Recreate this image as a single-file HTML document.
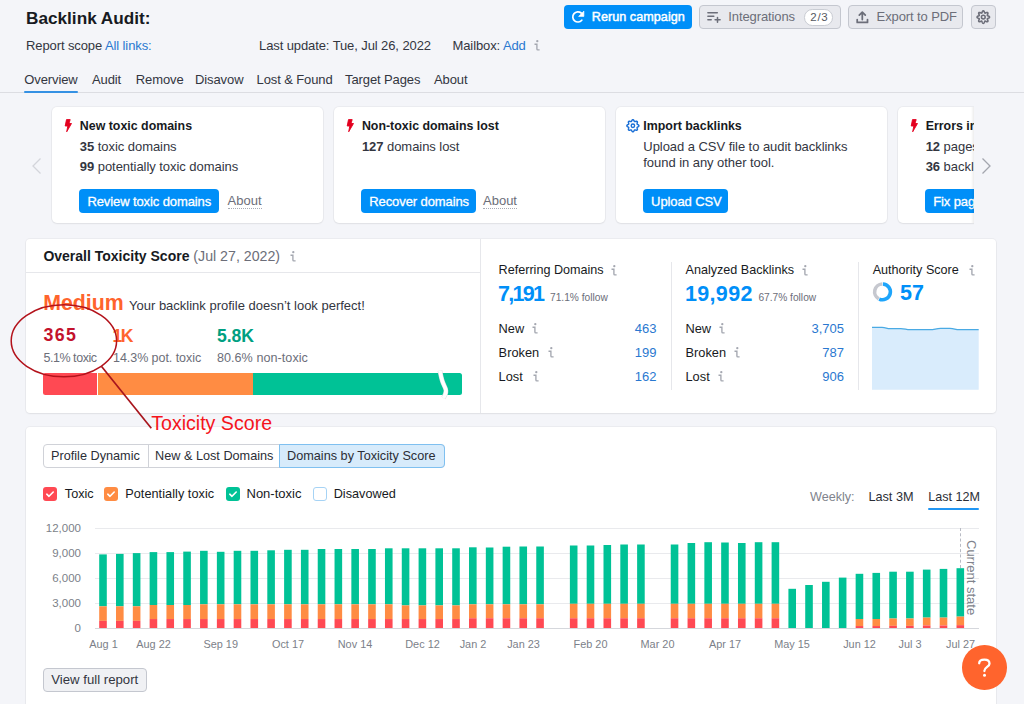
<!DOCTYPE html>
<html><head><meta charset="utf-8"><style>
html,body{margin:0;padding:0;width:1024px;height:704px;overflow:hidden;background:#f4f5f9;}
body{position:relative;font-family:"Liberation Sans",sans-serif;}
.t{position:absolute;white-space:nowrap;line-height:normal;}
.r{position:absolute;}
</style></head><body>
<div class="t" style="left:26.00px;top:7.68px;font-size:17.2px;font-weight:bold;color:#171a22;">Backlink Audit:</div>
<div class="t" style="left:26.00px;top:37.73px;font-size:13px;font-weight:normal;color:#33363f;letter-spacing:-0.1px">Report scope <span style="color:#2a78d0">All links:</span></div>
<div class="t" style="left:259.00px;top:37.73px;font-size:13px;font-weight:normal;color:#33363f;letter-spacing:-0.1px">Last update: Tue, Jul 26, 2022</div>
<div class="t" style="left:452.50px;top:37.73px;font-size:13px;font-weight:normal;color:#33363f;letter-spacing:-0.1px">Mailbox: <span style="color:#2a78d0">Add</span></div>
<svg class="r" style="left:534.00px;top:40.00px" width="7" height="11" viewBox="0 0 7 11"><circle cx="3.3" cy="1.2" r="1.15" fill="#a4a7b0"/><path d="M0.5 4.2H2.9V9Q2.9 9.9 3.8 9.9H5.6" fill="none" stroke="#a4a7b0" stroke-width="1.35"/></svg>
<div class="t" style="left:24.25px;top:71.98px;font-size:13px;font-weight:normal;color:#33363f;letter-spacing:-0.1px">Overview</div>
<div class="t" style="left:92.00px;top:71.98px;font-size:13px;font-weight:normal;color:#33363f;letter-spacing:-0.1px">Audit</div>
<div class="t" style="left:135.75px;top:71.98px;font-size:13px;font-weight:normal;color:#33363f;letter-spacing:-0.1px">Remove</div>
<div class="t" style="left:195.00px;top:71.98px;font-size:13px;font-weight:normal;color:#33363f;letter-spacing:-0.1px">Disavow</div>
<div class="t" style="left:256.50px;top:71.98px;font-size:13px;font-weight:normal;color:#33363f;letter-spacing:-0.1px">Lost &amp; Found</div>
<div class="t" style="left:345.00px;top:71.98px;font-size:13px;font-weight:normal;color:#33363f;letter-spacing:-0.1px">Target Pages</div>
<div class="t" style="left:434.00px;top:71.98px;font-size:13px;font-weight:normal;color:#33363f;letter-spacing:-0.1px">About</div>
<div class="r" style="left:0.00px;top:92.00px;width:1024.00px;height:1.00px;background:#dcdde2"></div>
<div class="r" style="left:24.00px;top:90.60px;width:53.50px;height:2.20px;background:#3591e3;border-radius:1px"></div>
<div class="r" style="left:564.00px;top:5.00px;width:128.00px;height:24.00px;background:#008ff8;border-radius:4px"></div>
<svg class="r" style="left:566px;top:6px" width="30" height="22" viewBox="0 0 30 22"><path d="M15.2 7.0A5.1 5.1 0 1 0 15.8 14.2" fill="none" stroke="#fff" stroke-width="1.7" stroke-linecap="round"/><path d="M17.9 5.1V10.4H12.6Z" fill="#fff" stroke="#fff" stroke-width="0.6" stroke-linejoin="round"/></svg>
<div class="t" style="left:591.75px;top:9.50px;font-size:12.6px;font-weight:normal;color:#fff;-webkit-text-stroke:0.45px #fff;letter-spacing:0.05px">Rerun campaign</div>
<div class="r" style="left:699.00px;top:5.00px;width:141.70px;height:24.00px;background:#e8e9ee;border:1px solid #c4c7cf;border-radius:4px;box-sizing:border-box"></div>
<svg class="r" style="left:700px;top:6px" width="30" height="22" viewBox="0 0 30 22"><path d="M7.9 6.7H17.3M7.9 10.3H13.8M7.9 13.75H11.2M15.1 13.75H20.1M17.5 11.6V16.2" fill="none" stroke="#6c6e79" stroke-width="1.55" stroke-linecap="round"/></svg>
<div class="t" style="left:728.25px;top:9.04px;font-size:13px;font-weight:normal;color:#6c6e79;letter-spacing:-0.1px">Integrations</div>
<div class="r" style="left:804.30px;top:9.00px;width:28.30px;height:16.50px;background:#fff;border:1px solid #c9ccd3;border-radius:8.25px;box-sizing:border-box"></div>
<div class="t" style="left:810.30px;top:11.09px;font-size:11.5px;font-weight:normal;color:#55585f;letter-spacing:0.7px">2/3</div>
<div class="r" style="left:848.00px;top:5.00px;width:115.00px;height:24.00px;background:#e8e9ee;border:1px solid #c4c7cf;border-radius:4px;box-sizing:border-box"></div>
<svg class="r" style="left:850px;top:6px" width="30" height="22" viewBox="0 0 30 22"><path d="M12.3 13.6V6.2M9.3 9.1L12.3 6.1L15.3 9.1M7.2 13.5V16.4H17.5V13.5" fill="none" stroke="#6c6e79" stroke-width="1.75" stroke-linecap="round" stroke-linejoin="round"/></svg>
<div class="t" style="left:876.60px;top:9.04px;font-size:13px;font-weight:normal;color:#6c6e79;letter-spacing:-0.1px">Export to PDF</div>
<div class="r" style="left:971.00px;top:5.00px;width:25.00px;height:24.00px;background:#e8e9ee;border:1px solid #c4c7cf;border-radius:4px;box-sizing:border-box"></div>
<svg class="r" style="left:971px;top:5px" width="25" height="24" viewBox="0 0 25 24"><path d="M12.30 5.85 L12.54 5.90 L12.78 6.05 L12.99 6.28 L13.18 6.58 L13.33 6.90 L13.47 7.23 L13.59 7.54 L13.70 7.79 L13.82 7.98 L13.96 8.08 L14.14 8.11 L14.36 8.06 L14.62 7.96 L14.92 7.83 L15.24 7.69 L15.59 7.57 L15.93 7.50 L16.24 7.49 L16.51 7.54 L16.72 7.68 L16.86 7.89 L16.91 8.16 L16.90 8.47 L16.83 8.81 L16.71 9.16 L16.57 9.48 L16.44 9.78 L16.34 10.04 L16.29 10.26 L16.32 10.44 L16.42 10.58 L16.61 10.70 L16.86 10.81 L17.17 10.93 L17.50 11.07 L17.82 11.22 L18.12 11.41 L18.35 11.62 L18.50 11.86 L18.55 12.10 L18.50 12.34 L18.35 12.58 L18.12 12.79 L17.82 12.98 L17.50 13.13 L17.17 13.27 L16.86 13.39 L16.61 13.50 L16.42 13.62 L16.32 13.76 L16.29 13.94 L16.34 14.16 L16.44 14.42 L16.57 14.72 L16.71 15.04 L16.83 15.39 L16.90 15.73 L16.91 16.04 L16.86 16.31 L16.72 16.52 L16.51 16.66 L16.24 16.71 L15.93 16.70 L15.59 16.63 L15.24 16.51 L14.92 16.37 L14.62 16.24 L14.36 16.14 L14.14 16.09 L13.96 16.12 L13.82 16.22 L13.70 16.41 L13.59 16.66 L13.47 16.97 L13.33 17.30 L13.18 17.62 L12.99 17.92 L12.78 18.15 L12.54 18.30 L12.30 18.35 L12.06 18.30 L11.82 18.15 L11.61 17.92 L11.42 17.62 L11.27 17.30 L11.13 16.97 L11.01 16.66 L10.90 16.41 L10.78 16.22 L10.64 16.12 L10.46 16.09 L10.24 16.14 L9.98 16.24 L9.68 16.37 L9.36 16.51 L9.01 16.63 L8.67 16.70 L8.36 16.71 L8.09 16.66 L7.88 16.52 L7.74 16.31 L7.69 16.04 L7.70 15.73 L7.77 15.39 L7.89 15.04 L8.03 14.72 L8.16 14.42 L8.26 14.16 L8.31 13.94 L8.28 13.76 L8.18 13.62 L7.99 13.50 L7.74 13.39 L7.43 13.27 L7.10 13.13 L6.78 12.98 L6.48 12.79 L6.25 12.58 L6.10 12.34 L6.05 12.10 L6.10 11.86 L6.25 11.62 L6.48 11.41 L6.78 11.22 L7.10 11.07 L7.43 10.93 L7.74 10.81 L7.99 10.70 L8.18 10.58 L8.28 10.44 L8.31 10.26 L8.26 10.04 L8.16 9.78 L8.03 9.48 L7.89 9.16 L7.77 8.81 L7.70 8.47 L7.69 8.16 L7.74 7.89 L7.88 7.68 L8.09 7.54 L8.36 7.49 L8.67 7.50 L9.01 7.57 L9.36 7.69 L9.68 7.83 L9.98 7.96 L10.24 8.06 L10.46 8.11 L10.64 8.08 L10.78 7.98 L10.90 7.79 L11.01 7.54 L11.13 7.23 L11.27 6.90 L11.42 6.58 L11.61 6.28 L11.82 6.05 L12.06 5.90 L12.30 5.85Z" fill="none" stroke="#6c6e79" stroke-width="1.6" stroke-linejoin="round"/><circle cx="12.3" cy="12.1" r="1.9" fill="none" stroke="#6c6e79" stroke-width="1.5"/></svg>
<div class="clip" style="position:absolute;left:0;top:100px;width:973.5px;height:130px;overflow:hidden">
<div class="r" style="left:51.60px;top:6.80px;width:271.30px;height:116.60px;background:#fff;border-radius:5px;box-shadow:0 0 0 1px rgba(0,0,0,0.035),0 1px 2px rgba(0,0,0,0.05)"></div>
<div class="r" style="left:333.70px;top:6.80px;width:271.30px;height:116.60px;background:#fff;border-radius:5px;box-shadow:0 0 0 1px rgba(0,0,0,0.035),0 1px 2px rgba(0,0,0,0.05)"></div>
<div class="r" style="left:615.70px;top:6.80px;width:271.30px;height:116.60px;background:#fff;border-radius:5px;box-shadow:0 0 0 1px rgba(0,0,0,0.035),0 1px 2px rgba(0,0,0,0.05)"></div>
<div class="r" style="left:897.70px;top:6.80px;width:271.30px;height:116.60px;background:#fff;border-radius:5px;box-shadow:0 0 0 1px rgba(0,0,0,0.035),0 1px 2px rgba(0,0,0,0.05)"></div>
<svg class="r" style="left:58.00px;top:14.00px" width="20" height="22" viewBox="0 0 20 22"><path d="M8.5 5.6H12.2L11.0 9.5H13.5L8.7 17.8L9.8 12.0H7.2Z" fill="#e3001f" stroke="#e3001f" stroke-width="0.9" stroke-linejoin="round"/></svg>
<div class="t" style="left:79.80px;top:19.08px;font-size:12.4px;font-weight:bold;color:#171a22;">New toxic domains</div>
<div class="t" style="left:79.80px;top:38.83px;font-size:13px;font-weight:normal;color:#33363f;letter-spacing:-0.05px"><b>35</b> toxic domains</div>
<div class="t" style="left:79.80px;top:59.23px;font-size:13px;font-weight:normal;color:#33363f;letter-spacing:-0.05px"><b>99</b> potentially toxic domains</div>
<div class="r" style="left:79.40px;top:89.00px;width:140.00px;height:24.00px;background:#008ff8;border-radius:4px"></div>
<div class="t" style="left:87.40px;top:94.04px;font-size:13px;font-weight:normal;color:#fff;-webkit-text-stroke:0.3px #fff;letter-spacing:-0.1px">Review toxic domains</div>
<div class="t" style="left:227.60px;top:93.73px;font-size:13px;font-weight:normal;color:#6c6e79;border-bottom:1px dotted #a8abb5;line-height:14px">About</div>
<svg class="r" style="left:340.10px;top:14.00px" width="20" height="22" viewBox="0 0 20 22"><path d="M8.5 5.6H12.2L11.0 9.5H13.5L8.7 17.8L9.8 12.0H7.2Z" fill="#e3001f" stroke="#e3001f" stroke-width="0.9" stroke-linejoin="round"/></svg>
<div class="t" style="left:361.90px;top:19.08px;font-size:12.4px;font-weight:bold;color:#171a22;">Non-toxic domains lost</div>
<div class="t" style="left:361.90px;top:38.83px;font-size:13px;font-weight:normal;color:#33363f;letter-spacing:-0.05px"><b>127</b> domains lost</div>
<div class="r" style="left:361.30px;top:89.00px;width:115.00px;height:24.00px;background:#008ff8;border-radius:4px"></div>
<div class="t" style="left:369.30px;top:94.04px;font-size:13px;font-weight:normal;color:#fff;-webkit-text-stroke:0.3px #fff;letter-spacing:-0.1px">Recover domains</div>
<div class="t" style="left:483.00px;top:93.73px;font-size:13px;font-weight:normal;color:#6c6e79;border-bottom:1px dotted #a8abb5;line-height:14px">About</div>
<svg class="r" style="left:615.7px;top:0px" width="40" height="40"><path d="M16.90 19.70 L17.14 19.74 L17.36 19.86 L17.57 20.05 L17.77 20.29 L17.93 20.55 L18.08 20.82 L18.22 21.07 L18.35 21.29 L18.49 21.45 L18.64 21.55 L18.82 21.58 L19.03 21.57 L19.27 21.51 L19.55 21.43 L19.84 21.34 L20.15 21.27 L20.45 21.24 L20.74 21.26 L20.98 21.33 L21.18 21.47 L21.32 21.67 L21.39 21.91 L21.41 22.20 L21.38 22.50 L21.31 22.81 L21.22 23.10 L21.14 23.38 L21.08 23.62 L21.07 23.83 L21.10 24.01 L21.20 24.16 L21.36 24.30 L21.58 24.43 L21.83 24.57 L22.10 24.72 L22.36 24.88 L22.60 25.08 L22.79 25.29 L22.91 25.51 L22.95 25.75 L22.91 25.99 L22.79 26.21 L22.60 26.42 L22.36 26.62 L22.10 26.78 L21.83 26.93 L21.58 27.07 L21.36 27.20 L21.20 27.34 L21.10 27.49 L21.07 27.67 L21.08 27.88 L21.14 28.12 L21.22 28.40 L21.31 28.69 L21.38 29.00 L21.41 29.30 L21.39 29.59 L21.32 29.83 L21.18 30.03 L20.98 30.17 L20.74 30.24 L20.45 30.26 L20.15 30.23 L19.84 30.16 L19.55 30.07 L19.27 29.99 L19.03 29.93 L18.82 29.92 L18.64 29.95 L18.49 30.05 L18.35 30.21 L18.22 30.43 L18.08 30.68 L17.93 30.95 L17.77 31.21 L17.57 31.45 L17.36 31.64 L17.14 31.76 L16.90 31.80 L16.66 31.76 L16.44 31.64 L16.23 31.45 L16.03 31.21 L15.87 30.95 L15.72 30.68 L15.58 30.43 L15.45 30.21 L15.31 30.05 L15.16 29.95 L14.98 29.92 L14.77 29.93 L14.53 29.99 L14.25 30.07 L13.96 30.16 L13.65 30.23 L13.35 30.26 L13.06 30.24 L12.82 30.17 L12.62 30.03 L12.48 29.83 L12.41 29.59 L12.39 29.30 L12.42 29.00 L12.49 28.69 L12.58 28.40 L12.66 28.12 L12.72 27.88 L12.73 27.67 L12.70 27.49 L12.60 27.34 L12.44 27.20 L12.22 27.07 L11.97 26.93 L11.70 26.78 L11.44 26.62 L11.20 26.42 L11.01 26.21 L10.89 25.99 L10.85 25.75 L10.89 25.51 L11.01 25.29 L11.20 25.08 L11.44 24.88 L11.70 24.72 L11.97 24.57 L12.22 24.43 L12.44 24.30 L12.60 24.16 L12.70 24.01 L12.73 23.83 L12.72 23.62 L12.66 23.38 L12.58 23.10 L12.49 22.81 L12.42 22.50 L12.39 22.20 L12.41 21.91 L12.48 21.67 L12.62 21.47 L12.82 21.33 L13.06 21.26 L13.35 21.24 L13.65 21.27 L13.96 21.34 L14.25 21.43 L14.53 21.51 L14.77 21.57 L14.98 21.58 L15.16 21.55 L15.31 21.45 L15.45 21.29 L15.58 21.07 L15.72 20.82 L15.87 20.55 L16.03 20.29 L16.23 20.05 L16.44 19.86 L16.66 19.74 L16.90 19.70Z" fill="none" stroke="#1a6fd6" stroke-width="1.45" stroke-linejoin="round"/><circle cx="16.899999999999977" cy="25.75" r="1.7" fill="none" stroke="#1a6fd6" stroke-width="1.4"/></svg>
<div class="t" style="left:643.30px;top:19.08px;font-size:12.4px;font-weight:bold;color:#171a22;">Import backlinks</div>
<div class="t" style="left:643.30px;top:38.93px;font-size:13px;font-weight:normal;color:#33363f;letter-spacing:-0.05px">Upload a CSV file to audit backlinks</div>
<div class="t" style="left:643.30px;top:54.64px;font-size:13px;font-weight:normal;color:#33363f;letter-spacing:-0.05px">found in any other tool.</div>
<div class="r" style="left:643.10px;top:89.00px;width:85.00px;height:24.00px;background:#008ff8;border-radius:4px"></div>
<div class="t" style="left:651.10px;top:94.04px;font-size:13px;font-weight:normal;color:#fff;-webkit-text-stroke:0.3px #fff;letter-spacing:-0.1px">Upload CSV</div>
<svg class="r" style="left:904.10px;top:14.00px" width="20" height="22" viewBox="0 0 20 22"><path d="M8.5 5.6H12.2L11.0 9.5H13.5L8.7 17.8L9.8 12.0H7.2Z" fill="#e3001f" stroke="#e3001f" stroke-width="0.9" stroke-linejoin="round"/></svg>
<div class="t" style="left:925.70px;top:19.08px;font-size:12.4px;font-weight:bold;color:#171a22;">Errors in target pages</div>
<div class="t" style="left:925.70px;top:38.83px;font-size:13px;font-weight:normal;color:#33363f;letter-spacing:-0.05px"><b>12</b> pages with errors</div>
<div class="t" style="left:925.70px;top:59.23px;font-size:13px;font-weight:normal;color:#33363f;letter-spacing:-0.05px"><b>36</b> backlinks affected</div>
<div class="r" style="left:925.20px;top:89.00px;width:100.00px;height:24.00px;background:#008ff8;border-radius:4px"></div>
<div class="t" style="left:933.20px;top:94.04px;font-size:13px;font-weight:normal;color:#fff;-webkit-text-stroke:0.3px #fff;letter-spacing:-0.1px">Fix pages</div>
<div class="r" style="left:970.50px;top:6.80px;width:3.00px;height:116.60px;background:linear-gradient(to right,rgba(0,0,0,0),rgba(0,0,0,0.07))"></div>
</div>
<svg class="r" style="left:31px;top:157px" width="11" height="18" viewBox="0 0 11 18"><path d="M9.5 1.5L2 9L9.5 16.5" fill="none" stroke="#d3d5db" stroke-width="1.3"/></svg>
<svg class="r" style="left:981px;top:157px" width="11" height="18" viewBox="0 0 11 18"><path d="M1.5 1.5L9 9L1.5 16.5" fill="none" stroke="#a3a6ae" stroke-width="1.3"/></svg>
<div class="r" style="left:26.00px;top:239.00px;width:970.00px;height:173.50px;background:#fff;border-radius:4px;box-shadow:0 0 0 1px rgba(0,0,0,0.035),0 1px 2px rgba(0,0,0,0.05)"></div>
<div class="r" style="left:26.00px;top:272.00px;width:454.00px;height:1.00px;background:#e6e7eb"></div>
<div class="r" style="left:480.00px;top:239.00px;width:1.00px;height:173.50px;background:#e6e7eb"></div>
<div class="t" style="left:43.40px;top:248.33px;font-size:14px;font-weight:bold;color:#171a22;">Overall Toxicity Score <span style="font-weight:normal;color:#6c6e79;font-size:14.2px">(Jul 27, 2022)</span></div>
<svg class="r" style="left:290.00px;top:251.00px" width="7" height="11" viewBox="0 0 7 11"><circle cx="3.3" cy="1.2" r="1.15" fill="#a4a7b0"/><path d="M0.5 4.2H2.9V9Q2.9 9.9 3.8 9.9H5.6" fill="none" stroke="#a4a7b0" stroke-width="1.35"/></svg>
<div class="t" style="left:43.20px;top:290.72px;font-size:21.3px;font-weight:bold;color:#ff642d;">Medium</div>
<div class="t" style="left:129.00px;top:298.24px;font-size:13px;font-weight:normal;color:#33363f;">Your backlink profile doesn’t look perfect!</div>
<div class="t" style="left:43.40px;top:325.39px;font-size:17.8px;font-weight:bold;color:#c3122d;letter-spacing:1.4px">365</div>
<div class="t" style="left:43.40px;top:351.29px;font-size:12.5px;font-weight:normal;color:#6c6e79;letter-spacing:-0.45px">5.1% toxic</div>
<div class="t" style="left:112.50px;top:325.57px;font-size:17.6px;font-weight:bold;color:#ff642d;letter-spacing:-1.6px">1K</div>
<div class="t" style="left:113.00px;top:351.29px;font-size:12.5px;font-weight:normal;color:#6c6e79;letter-spacing:-0.05px">14.3% pot. toxic</div>
<div class="t" style="left:216.90px;top:325.57px;font-size:17.6px;font-weight:bold;color:#009f81;">5.8K</div>
<div class="t" style="left:216.90px;top:351.20px;font-size:12.6px;font-weight:normal;color:#6c6e79;letter-spacing:0.05px">80.6% non-toxic</div>
<div class="r" style="left:43.40px;top:373.00px;width:54.00px;height:22.20px;background:#ff4953;border-radius:2.5px 0 0 2.5px"></div>
<div class="r" style="left:98.00px;top:373.00px;width:154.50px;height:22.20px;background:#ff8c43"></div>
<div class="r" style="left:253.20px;top:373.00px;width:208.70px;height:22.20px;background:#00c296;border-radius:0 2.5px 2.5px 0"></div>
<svg class="r" style="left:430px;top:365px" width="25" height="40" viewBox="0 0 25 40"><path d="M9.9 5.5C11 11 11.5 15 13.5 19C16 24 17.6 27 13.3 33" fill="none" stroke="#d9dbe0" stroke-width="4.6" stroke-linecap="butt"/><path d="M9.9 5.5C11 11 11.5 15 13.5 19C16 24 17.6 27 13.3 33" fill="none" stroke="#fff" stroke-width="3.6" stroke-linecap="butt"/><rect x="0" y="8" width="25" height="22.2" fill="none"/></svg>
<div class="t" style="left:498.60px;top:262.60px;font-size:12.6px;font-weight:normal;color:#171a22;">Referring Domains</div>
<div class="t" style="left:498.00px;top:281.54px;font-size:21.5px;font-weight:bold;color:#008ff8;letter-spacing:-1.7px">7,191</div>
<div class="t" style="left:550.00px;top:291.77px;font-size:10.2px;font-weight:normal;color:#6c6e79;">71.1% follow</div>
<div class="t" style="left:498.60px;top:320.92px;font-size:12.8px;font-weight:normal;color:#171a22;">New</div>
<div class="t" style="right:367.50px;top:320.74px;font-size:13px;color:#2a78d0">463</div>
<div class="t" style="left:498.60px;top:344.92px;font-size:12.8px;font-weight:normal;color:#171a22;">Broken</div>
<div class="t" style="right:367.50px;top:344.74px;font-size:13px;color:#2a78d0">199</div>
<div class="t" style="left:498.60px;top:368.92px;font-size:12.8px;font-weight:normal;color:#171a22;">Lost</div>
<div class="t" style="right:367.50px;top:368.74px;font-size:13px;color:#2a78d0">162</div>
<div class="t" style="left:685.50px;top:262.60px;font-size:12.6px;font-weight:normal;color:#171a22;">Analyzed Backlinks</div>
<div class="t" style="left:684.90px;top:281.54px;font-size:21.5px;font-weight:bold;color:#008ff8;letter-spacing:0.35px">19,992</div>
<div class="t" style="left:758.40px;top:291.77px;font-size:10.2px;font-weight:normal;color:#6c6e79;">67.7% follow</div>
<div class="t" style="left:685.50px;top:320.92px;font-size:12.8px;font-weight:normal;color:#171a22;">New</div>
<div class="t" style="right:180.00px;top:320.74px;font-size:13px;color:#2a78d0">3,705</div>
<div class="t" style="left:685.50px;top:344.92px;font-size:12.8px;font-weight:normal;color:#171a22;">Broken</div>
<div class="t" style="right:180.00px;top:344.74px;font-size:13px;color:#2a78d0">787</div>
<div class="t" style="left:685.50px;top:368.92px;font-size:12.8px;font-weight:normal;color:#171a22;">Lost</div>
<div class="t" style="right:180.00px;top:368.74px;font-size:13px;color:#2a78d0">906</div>
<svg class="r" style="left:610.50px;top:265.00px" width="7" height="11" viewBox="0 0 7 11"><circle cx="3.3" cy="1.2" r="1.15" fill="#a4a7b0"/><path d="M0.5 4.2H2.9V9Q2.9 9.9 3.8 9.9H5.6" fill="none" stroke="#a4a7b0" stroke-width="1.35"/></svg>
<svg class="r" style="left:802.00px;top:265.00px" width="7" height="11" viewBox="0 0 7 11"><circle cx="3.3" cy="1.2" r="1.15" fill="#a4a7b0"/><path d="M0.5 4.2H2.9V9Q2.9 9.9 3.8 9.9H5.6" fill="none" stroke="#a4a7b0" stroke-width="1.35"/></svg>
<svg class="r" style="left:969.00px;top:265.00px" width="7" height="11" viewBox="0 0 7 11"><circle cx="3.3" cy="1.2" r="1.15" fill="#a4a7b0"/><path d="M0.5 4.2H2.9V9Q2.9 9.9 3.8 9.9H5.6" fill="none" stroke="#a4a7b0" stroke-width="1.35"/></svg>
<svg class="r" style="left:532.00px;top:323.00px" width="7" height="11" viewBox="0 0 7 11"><circle cx="3.3" cy="1.2" r="1.15" fill="#a4a7b0"/><path d="M0.5 4.2H2.9V9Q2.9 9.9 3.8 9.9H5.6" fill="none" stroke="#a4a7b0" stroke-width="1.35"/></svg>
<svg class="r" style="left:548.00px;top:347.00px" width="7" height="11" viewBox="0 0 7 11"><circle cx="3.3" cy="1.2" r="1.15" fill="#a4a7b0"/><path d="M0.5 4.2H2.9V9Q2.9 9.9 3.8 9.9H5.6" fill="none" stroke="#a4a7b0" stroke-width="1.35"/></svg>
<svg class="r" style="left:532.70px;top:371.00px" width="7" height="11" viewBox="0 0 7 11"><circle cx="3.3" cy="1.2" r="1.15" fill="#a4a7b0"/><path d="M0.5 4.2H2.9V9Q2.9 9.9 3.8 9.9H5.6" fill="none" stroke="#a4a7b0" stroke-width="1.35"/></svg>
<svg class="r" style="left:719.40px;top:323.00px" width="7" height="11" viewBox="0 0 7 11"><circle cx="3.3" cy="1.2" r="1.15" fill="#a4a7b0"/><path d="M0.5 4.2H2.9V9Q2.9 9.9 3.8 9.9H5.6" fill="none" stroke="#a4a7b0" stroke-width="1.35"/></svg>
<svg class="r" style="left:733.50px;top:347.00px" width="7" height="11" viewBox="0 0 7 11"><circle cx="3.3" cy="1.2" r="1.15" fill="#a4a7b0"/><path d="M0.5 4.2H2.9V9Q2.9 9.9 3.8 9.9H5.6" fill="none" stroke="#a4a7b0" stroke-width="1.35"/></svg>
<svg class="r" style="left:718.00px;top:371.00px" width="7" height="11" viewBox="0 0 7 11"><circle cx="3.3" cy="1.2" r="1.15" fill="#a4a7b0"/><path d="M0.5 4.2H2.9V9Q2.9 9.9 3.8 9.9H5.6" fill="none" stroke="#a4a7b0" stroke-width="1.35"/></svg>
<div class="r" style="left:671.00px;top:261.50px;width:1.00px;height:128.50px;background:#e6e7eb"></div>
<div class="r" style="left:858.00px;top:261.50px;width:1.00px;height:128.50px;background:#e6e7eb"></div>
<div class="t" style="left:872.70px;top:262.60px;font-size:12.6px;font-weight:normal;color:#171a22;">Authority Score</div>
<svg class="r" style="left:870px;top:280px" width="25" height="25" viewBox="0 0 25 25"><path d="M12.84 4.06A7.85 7.85 0 1 1 9.18 19.01" fill="none" stroke="#1ea5fb" stroke-width="3.6"/><path d="M8.75 18.80A7.85 7.85 0 0 1 12.16 4.06" fill="none" stroke="#c6c8cf" stroke-width="3.6"/></svg>
<div class="t" style="left:900.00px;top:281.34px;font-size:21.5px;font-weight:bold;color:#008ff8;">57</div>
<svg class="r" style="left:872.4px;top:325px" width="107" height="65" viewBox="0 0 107 65"><path d="M0 2.4L10 2.4C14 2.4 14.5 3.6 18.2 3.6L28.8 3.6C33 3.6 34 4.7 38.1 4.7L58.1 4.7C62.5 4.7 64 3.3 68.6 3.3L78 3.3C82.5 3.3 83 4.7 87.4 4.7L106.7 4.7V64.7H0Z" fill="#d9ecfc"/><path d="M0 2.4L10 2.4C14 2.4 14.5 3.6 18.2 3.6L28.8 3.6C33 3.6 34 4.7 38.1 4.7L58.1 4.7C62.5 4.7 64 3.3 68.6 3.3L78 3.3C82.5 3.3 83 4.7 87.4 4.7L106.7 4.7" fill="none" stroke="#4aaae4" stroke-width="1.3"/></svg>
<div class="r" style="left:26.00px;top:427.00px;width:970.00px;height:300.00px;background:#fff;border-radius:4px;box-shadow:0 0 0 1px rgba(0,0,0,0.035),0 1px 2px rgba(0,0,0,0.05)"></div>
<div class="r" style="left:43.30px;top:444.00px;width:401.50px;height:23.50px;border:1px solid #d0d2d8;border-radius:4px;box-sizing:border-box"></div>
<div class="r" style="left:279.00px;top:444.00px;width:165.80px;height:23.50px;background:#d7ebfb;border:1px solid #7fc0f0;border-radius:0 4px 4px 0;box-sizing:border-box"></div>
<div class="r" style="left:147.50px;top:444.00px;width:1.00px;height:23.50px;background:#d0d2d8"></div>
<div class="t" style="left:51.00px;top:448.51px;font-size:12.7px;font-weight:normal;color:#2b2e36;">Profile Dynamic</div>
<div class="t" style="left:155.00px;top:448.51px;font-size:12.7px;font-weight:normal;color:#2b2e36;">New &amp; Lost Domains</div>
<div class="t" style="left:287.00px;top:448.51px;font-size:12.7px;font-weight:normal;color:#2b2e36;">Domains by Toxicity Score</div>
<svg class="r" style="left:43.3px;top:486.8px" width="14" height="14" viewBox="0 0 14 14"><rect width="14" height="14" rx="3" fill="#ff4953"/><path d="M3.8 7.2L6 9.3L10.2 5" fill="none" stroke="#fff" stroke-width="1.6" stroke-linecap="round" stroke-linejoin="round"/></svg>
<div class="t" style="left:64.80px;top:486.71px;font-size:12.7px;font-weight:normal;color:#171a22;">Toxic</div>
<svg class="r" style="left:104px;top:486.8px" width="14" height="14" viewBox="0 0 14 14"><rect width="14" height="14" rx="3" fill="#ff8c43"/><path d="M3.8 7.2L6 9.3L10.2 5" fill="none" stroke="#fff" stroke-width="1.6" stroke-linecap="round" stroke-linejoin="round"/></svg>
<div class="t" style="left:125.20px;top:486.71px;font-size:12.7px;font-weight:normal;color:#171a22;letter-spacing:0.05px">Potentially toxic</div>
<svg class="r" style="left:225.5px;top:486.8px" width="14" height="14" viewBox="0 0 14 14"><rect width="14" height="14" rx="3" fill="#00c296"/><path d="M3.8 7.2L6 9.3L10.2 5" fill="none" stroke="#fff" stroke-width="1.6" stroke-linecap="round" stroke-linejoin="round"/></svg>
<div class="t" style="left:246.50px;top:486.44px;font-size:13px;font-weight:normal;color:#171a22;">Non-toxic</div>
<div class="r" style="left:313.00px;top:486.80px;width:14.00px;height:14.00px;border:1px solid #a6d3f5;border-radius:3px;box-sizing:border-box;background:#fff"></div>
<div class="t" style="left:333.70px;top:486.71px;font-size:12.7px;font-weight:normal;color:#171a22;">Disavowed</div>
<div class="t" style="left:810.00px;top:489.90px;font-size:12.6px;font-weight:normal;color:#80838c;">Weekly:</div>
<div class="t" style="left:868.40px;top:489.81px;font-size:12.7px;font-weight:normal;color:#2b2e36;">Last 3M</div>
<div class="t" style="left:928.30px;top:489.90px;font-size:12.6px;font-weight:normal;color:#2b2e36;">Last 12M</div>
<div class="r" style="left:928.00px;top:508.00px;width:51.20px;height:2.00px;background:#2196f3;border-radius:1px"></div>
<div class="r" style="left:95.00px;top:527.50px;width:884.00px;height:1.00px;background:#e9eaed"></div>
<div class="t" style="right:943.00px;top:521.59px;font-size:11.5px;color:#7c7f89">12,000</div>
<div class="r" style="left:95.00px;top:552.50px;width:884.00px;height:1.00px;background:#e9eaed"></div>
<div class="t" style="right:943.00px;top:546.59px;font-size:11.5px;color:#7c7f89">9,000</div>
<div class="r" style="left:95.00px;top:577.50px;width:884.00px;height:1.00px;background:#e9eaed"></div>
<div class="t" style="right:943.00px;top:571.59px;font-size:11.5px;color:#7c7f89">6,000</div>
<div class="r" style="left:95.00px;top:602.50px;width:884.00px;height:1.00px;background:#e9eaed"></div>
<div class="t" style="right:943.00px;top:596.59px;font-size:11.5px;color:#7c7f89">3,000</div>
<div class="r" style="left:95.00px;top:627.50px;width:884.00px;height:1.00px;background:#d5d7dc"></div>
<div class="t" style="right:943.00px;top:621.59px;font-size:11.5px;color:#7c7f89">0</div>
<div class="r" style="left:960px;top:528px;width:0;height:40px;border-left:1px dashed #b8bbc4"></div>
<div class="t" style="left:964px;top:540px;font-size:13px;color:#80838c;writing-mode:vertical-rl">Current state</div>
<svg class="r" style="left:0;top:0" width="1024" height="704"><rect x="99.20" y="554.40" width="7.6" height="51.90" fill="#00c296"/><rect x="99.20" y="606.30" width="7.6" height="14.55" fill="#ff8c43"/><rect x="99.20" y="620.85" width="7.6" height="7.15" fill="#ff4953"/><rect x="116.01" y="553.90" width="7.6" height="52.40" fill="#00c296"/><rect x="116.01" y="606.30" width="7.6" height="14.55" fill="#ff8c43"/><rect x="116.01" y="620.85" width="7.6" height="7.15" fill="#ff4953"/><rect x="132.82" y="553.10" width="7.6" height="53.20" fill="#00c296"/><rect x="132.82" y="606.30" width="7.6" height="14.55" fill="#ff8c43"/><rect x="132.82" y="620.85" width="7.6" height="7.15" fill="#ff4953"/><rect x="149.63" y="552.10" width="7.6" height="52.90" fill="#00c296"/><rect x="149.63" y="605.00" width="7.6" height="14.05" fill="#ff8c43"/><rect x="149.63" y="619.05" width="7.6" height="8.95" fill="#ff4953"/><rect x="166.44" y="552.10" width="7.6" height="52.90" fill="#00c296"/><rect x="166.44" y="605.00" width="7.6" height="14.05" fill="#ff8c43"/><rect x="166.44" y="619.05" width="7.6" height="8.95" fill="#ff4953"/><rect x="183.25" y="551.60" width="7.6" height="53.40" fill="#00c296"/><rect x="183.25" y="605.00" width="7.6" height="14.05" fill="#ff8c43"/><rect x="183.25" y="619.05" width="7.6" height="8.95" fill="#ff4953"/><rect x="200.06" y="550.80" width="7.6" height="53.50" fill="#00c296"/><rect x="200.06" y="604.30" width="7.6" height="14.75" fill="#ff8c43"/><rect x="200.06" y="619.05" width="7.6" height="8.95" fill="#ff4953"/><rect x="216.87" y="551.80" width="7.6" height="52.50" fill="#00c296"/><rect x="216.87" y="604.30" width="7.6" height="14.75" fill="#ff8c43"/><rect x="216.87" y="619.05" width="7.6" height="8.95" fill="#ff4953"/><rect x="233.68" y="550.80" width="7.6" height="53.50" fill="#00c296"/><rect x="233.68" y="604.30" width="7.6" height="14.75" fill="#ff8c43"/><rect x="233.68" y="619.05" width="7.6" height="8.95" fill="#ff4953"/><rect x="250.49" y="550.80" width="7.6" height="53.50" fill="#00c296"/><rect x="250.49" y="604.30" width="7.6" height="14.75" fill="#ff8c43"/><rect x="250.49" y="619.05" width="7.6" height="8.95" fill="#ff4953"/><rect x="267.30" y="550.30" width="7.6" height="54.00" fill="#00c296"/><rect x="267.30" y="604.30" width="7.6" height="14.75" fill="#ff8c43"/><rect x="267.30" y="619.05" width="7.6" height="8.95" fill="#ff4953"/><rect x="284.11" y="549.80" width="7.6" height="54.50" fill="#00c296"/><rect x="284.11" y="604.30" width="7.6" height="14.75" fill="#ff8c43"/><rect x="284.11" y="619.05" width="7.6" height="8.95" fill="#ff4953"/><rect x="300.92" y="549.80" width="7.6" height="54.50" fill="#00c296"/><rect x="300.92" y="604.30" width="7.6" height="14.75" fill="#ff8c43"/><rect x="300.92" y="619.05" width="7.6" height="8.95" fill="#ff4953"/><rect x="317.73" y="549.00" width="7.6" height="55.30" fill="#00c296"/><rect x="317.73" y="604.30" width="7.6" height="14.75" fill="#ff8c43"/><rect x="317.73" y="619.05" width="7.6" height="8.95" fill="#ff4953"/><rect x="334.54" y="549.00" width="7.6" height="55.30" fill="#00c296"/><rect x="334.54" y="604.30" width="7.6" height="14.75" fill="#ff8c43"/><rect x="334.54" y="619.05" width="7.6" height="8.95" fill="#ff4953"/><rect x="351.35" y="549.00" width="7.6" height="55.30" fill="#00c296"/><rect x="351.35" y="604.30" width="7.6" height="14.75" fill="#ff8c43"/><rect x="351.35" y="619.05" width="7.6" height="8.95" fill="#ff4953"/><rect x="368.16" y="549.00" width="7.6" height="55.30" fill="#00c296"/><rect x="368.16" y="604.30" width="7.6" height="14.75" fill="#ff8c43"/><rect x="368.16" y="619.05" width="7.6" height="8.95" fill="#ff4953"/><rect x="384.97" y="548.30" width="7.6" height="56.00" fill="#00c296"/><rect x="384.97" y="604.30" width="7.6" height="14.75" fill="#ff8c43"/><rect x="384.97" y="619.05" width="7.6" height="8.95" fill="#ff4953"/><rect x="401.78" y="548.30" width="7.6" height="57.10" fill="#00c296"/><rect x="401.78" y="605.40" width="7.6" height="13.65" fill="#ff8c43"/><rect x="401.78" y="619.05" width="7.6" height="8.95" fill="#ff4953"/><rect x="418.59" y="548.30" width="7.6" height="57.10" fill="#00c296"/><rect x="418.59" y="605.40" width="7.6" height="13.65" fill="#ff8c43"/><rect x="418.59" y="619.05" width="7.6" height="8.95" fill="#ff4953"/><rect x="435.40" y="548.30" width="7.6" height="57.10" fill="#00c296"/><rect x="435.40" y="605.40" width="7.6" height="13.65" fill="#ff8c43"/><rect x="435.40" y="619.05" width="7.6" height="8.95" fill="#ff4953"/><rect x="452.21" y="548.30" width="7.6" height="57.10" fill="#00c296"/><rect x="452.21" y="605.40" width="7.6" height="13.65" fill="#ff8c43"/><rect x="452.21" y="619.05" width="7.6" height="8.95" fill="#ff4953"/><rect x="469.02" y="547.30" width="7.6" height="57.00" fill="#00c296"/><rect x="469.02" y="604.30" width="7.6" height="13.95" fill="#ff8c43"/><rect x="469.02" y="618.25" width="7.6" height="9.75" fill="#ff4953"/><rect x="485.83" y="547.50" width="7.6" height="56.80" fill="#00c296"/><rect x="485.83" y="604.30" width="7.6" height="13.95" fill="#ff8c43"/><rect x="485.83" y="618.25" width="7.6" height="9.75" fill="#ff4953"/><rect x="502.64" y="546.70" width="7.6" height="57.60" fill="#00c296"/><rect x="502.64" y="604.30" width="7.6" height="13.95" fill="#ff8c43"/><rect x="502.64" y="618.25" width="7.6" height="9.75" fill="#ff4953"/><rect x="519.45" y="546.50" width="7.6" height="57.80" fill="#00c296"/><rect x="519.45" y="604.30" width="7.6" height="13.95" fill="#ff8c43"/><rect x="519.45" y="618.25" width="7.6" height="9.75" fill="#ff4953"/><rect x="536.26" y="546.50" width="7.6" height="57.80" fill="#00c296"/><rect x="536.26" y="604.30" width="7.6" height="13.95" fill="#ff8c43"/><rect x="536.26" y="618.25" width="7.6" height="9.75" fill="#ff4953"/><rect x="569.88" y="545.50" width="7.6" height="58.30" fill="#00c296"/><rect x="569.88" y="603.80" width="7.6" height="14.45" fill="#ff8c43"/><rect x="569.88" y="618.25" width="7.6" height="9.75" fill="#ff4953"/><rect x="586.69" y="545.50" width="7.6" height="58.30" fill="#00c296"/><rect x="586.69" y="603.80" width="7.6" height="14.45" fill="#ff8c43"/><rect x="586.69" y="618.25" width="7.6" height="9.75" fill="#ff4953"/><rect x="603.50" y="545.00" width="7.6" height="58.80" fill="#00c296"/><rect x="603.50" y="603.80" width="7.6" height="14.45" fill="#ff8c43"/><rect x="603.50" y="618.25" width="7.6" height="9.75" fill="#ff4953"/><rect x="620.31" y="544.50" width="7.6" height="59.30" fill="#00c296"/><rect x="620.31" y="603.80" width="7.6" height="14.45" fill="#ff8c43"/><rect x="620.31" y="618.25" width="7.6" height="9.75" fill="#ff4953"/><rect x="637.12" y="544.50" width="7.6" height="59.30" fill="#00c296"/><rect x="637.12" y="603.80" width="7.6" height="14.45" fill="#ff8c43"/><rect x="637.12" y="618.25" width="7.6" height="9.75" fill="#ff4953"/><rect x="670.74" y="544.50" width="7.6" height="59.30" fill="#00c296"/><rect x="670.74" y="603.80" width="7.6" height="14.45" fill="#ff8c43"/><rect x="670.74" y="618.25" width="7.6" height="9.75" fill="#ff4953"/><rect x="687.55" y="543.00" width="7.6" height="60.80" fill="#00c296"/><rect x="687.55" y="603.80" width="7.6" height="14.45" fill="#ff8c43"/><rect x="687.55" y="618.25" width="7.6" height="9.75" fill="#ff4953"/><rect x="704.36" y="542.20" width="7.6" height="61.60" fill="#00c296"/><rect x="704.36" y="603.80" width="7.6" height="14.45" fill="#ff8c43"/><rect x="704.36" y="618.25" width="7.6" height="9.75" fill="#ff4953"/><rect x="721.17" y="542.50" width="7.6" height="61.30" fill="#00c296"/><rect x="721.17" y="603.80" width="7.6" height="14.45" fill="#ff8c43"/><rect x="721.17" y="618.25" width="7.6" height="9.75" fill="#ff4953"/><rect x="737.98" y="543.00" width="7.6" height="60.80" fill="#00c296"/><rect x="737.98" y="603.80" width="7.6" height="14.45" fill="#ff8c43"/><rect x="737.98" y="618.25" width="7.6" height="9.75" fill="#ff4953"/><rect x="754.79" y="542.20" width="7.6" height="61.60" fill="#00c296"/><rect x="754.79" y="603.80" width="7.6" height="14.45" fill="#ff8c43"/><rect x="754.79" y="618.25" width="7.6" height="9.75" fill="#ff4953"/><rect x="771.60" y="542.20" width="7.6" height="61.60" fill="#00c296"/><rect x="771.60" y="603.80" width="7.6" height="14.45" fill="#ff8c43"/><rect x="771.60" y="618.25" width="7.6" height="9.75" fill="#ff4953"/><rect x="788.41" y="588.80" width="7.6" height="39.20" fill="#00c296"/><rect x="805.22" y="585.00" width="7.6" height="43.00" fill="#00c296"/><rect x="822.03" y="581.80" width="7.6" height="46.20" fill="#00c296"/><rect x="838.84" y="577.60" width="7.6" height="50.40" fill="#00c296"/><rect x="855.65" y="573.80" width="7.6" height="45.20" fill="#00c296"/><rect x="855.65" y="619.00" width="7.6" height="7.05" fill="#ff8c43"/><rect x="855.65" y="626.05" width="7.6" height="1.95" fill="#ff4953"/><rect x="872.46" y="572.90" width="7.6" height="46.10" fill="#00c296"/><rect x="872.46" y="619.00" width="7.6" height="7.05" fill="#ff8c43"/><rect x="872.46" y="626.05" width="7.6" height="1.95" fill="#ff4953"/><rect x="889.27" y="571.70" width="7.6" height="46.80" fill="#00c296"/><rect x="889.27" y="618.50" width="7.6" height="7.35" fill="#ff8c43"/><rect x="889.27" y="625.85" width="7.6" height="2.15" fill="#ff4953"/><rect x="906.08" y="571.70" width="7.6" height="46.80" fill="#00c296"/><rect x="906.08" y="618.50" width="7.6" height="7.35" fill="#ff8c43"/><rect x="906.08" y="625.85" width="7.6" height="2.15" fill="#ff4953"/><rect x="922.89" y="569.60" width="7.6" height="48.00" fill="#00c296"/><rect x="922.89" y="617.60" width="7.6" height="7.85" fill="#ff8c43"/><rect x="922.89" y="625.45" width="7.6" height="2.55" fill="#ff4953"/><rect x="939.70" y="568.90" width="7.6" height="48.70" fill="#00c296"/><rect x="939.70" y="617.60" width="7.6" height="7.85" fill="#ff8c43"/><rect x="939.70" y="625.45" width="7.6" height="2.55" fill="#ff4953"/><rect x="956.51" y="568.20" width="7.6" height="48.40" fill="#00c296"/><rect x="956.51" y="616.60" width="7.6" height="8.55" fill="#ff8c43"/><rect x="956.51" y="625.15" width="7.6" height="2.85" fill="#ff4953"/></svg>
<div class="t" style="left:63.50px;width:80px;text-align:center;top:638.14px;font-size:10.9px;color:#7c7f89">Aug 1</div>
<div class="t" style="left:113.50px;width:80px;text-align:center;top:638.14px;font-size:10.9px;color:#7c7f89">Aug 22</div>
<div class="t" style="left:180.70px;width:80px;text-align:center;top:638.14px;font-size:10.9px;color:#7c7f89">Sep 19</div>
<div class="t" style="left:248.00px;width:80px;text-align:center;top:638.14px;font-size:10.9px;color:#7c7f89">Oct 17</div>
<div class="t" style="left:315.00px;width:80px;text-align:center;top:638.14px;font-size:10.9px;color:#7c7f89">Nov 14</div>
<div class="t" style="left:382.50px;width:80px;text-align:center;top:638.14px;font-size:10.9px;color:#7c7f89">Dec 12</div>
<div class="t" style="left:433.00px;width:80px;text-align:center;top:638.14px;font-size:10.9px;color:#7c7f89">Jan 2</div>
<div class="t" style="left:483.50px;width:80px;text-align:center;top:638.14px;font-size:10.9px;color:#7c7f89">Jan 23</div>
<div class="t" style="left:550.50px;width:80px;text-align:center;top:638.14px;font-size:10.9px;color:#7c7f89">Feb 20</div>
<div class="t" style="left:617.50px;width:80px;text-align:center;top:638.14px;font-size:10.9px;color:#7c7f89">Mar 20</div>
<div class="t" style="left:685.00px;width:80px;text-align:center;top:638.14px;font-size:10.9px;color:#7c7f89">Apr 17</div>
<div class="t" style="left:752.00px;width:80px;text-align:center;top:638.14px;font-size:10.9px;color:#7c7f89">May 15</div>
<div class="t" style="left:819.50px;width:80px;text-align:center;top:638.14px;font-size:10.9px;color:#7c7f89">Jun 12</div>
<div class="t" style="left:870.00px;width:80px;text-align:center;top:638.14px;font-size:10.9px;color:#7c7f89">Jul 3</div>
<div class="t" style="left:920.50px;width:80px;text-align:center;top:638.14px;font-size:10.9px;color:#7c7f89">Jul 27</div>
<div class="r" style="left:43.00px;top:668.00px;width:104.00px;height:23.50px;background:#f0f1f4;border:1px solid #c4c7cf;border-radius:4px;box-sizing:border-box"></div>
<div class="t" style="left:51.25px;top:671.75px;font-size:13.2px;font-weight:normal;color:#33363f;">View full report</div>
<svg class="r" style="left:0;top:0" width="1024" height="704"><ellipse cx="63.9" cy="340.8" rx="52.7" ry="36" fill="none" stroke="#b3121b" stroke-width="1.5"/><path d="M101.6 366.5L151.3 428.2" stroke="#a8151d" stroke-width="1.7"/></svg>
<div class="t" style="left:151.20px;top:412.06px;font-size:19.6px;font-weight:normal;color:#f5141c;">Toxicity Score</div>
<div class="r" style="left:962.00px;top:645.20px;width:44.70px;height:44.70px;background:#ff642d;border-radius:50%"></div>
<svg class="r" style="left:970px;top:652px" width="30" height="32" viewBox="0 0 30 32"><path d="M9.2 11.3C9.2 8.9 11.3 7.7 14.4 7.7C17.5 7.7 19.5 9.3 19.5 11.7C19.5 14.6 14.5 15.3 14.4 18.7V19.1" fill="none" stroke="#fff" stroke-width="2.3" stroke-linecap="round"/><circle cx="14.5" cy="23.2" r="1.5" fill="#fff"/></svg>
</body></html>
